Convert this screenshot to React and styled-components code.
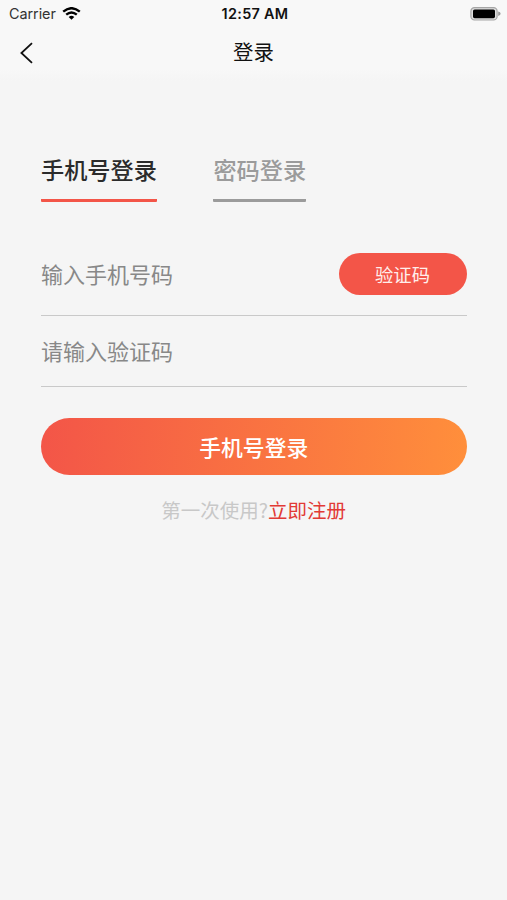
import React from "react";
import styled, { createGlobalStyle } from "styled-components";

const colors = {
	background: "#f5f5f5",
	bar: "#f8f8f8",
	red: "#f35548",
	orange: "#ff8f3b",
	link: "#e23a35",
	text: "#2b2b2b",
	muted: "#9b9b9b",
	placeholder: "#888888",
	hint: "#c8c8c8",
	line: "#c9c9c9",
};

const GlobalStyle = createGlobalStyle`
	* {
		box-sizing: border-box;
	}

	body {
		margin: 0;
		background: ${ colors.background };
		font-family: "Noto Sans CJK SC", sans-serif;
	}

	button {
		padding: 0;
		border: 0;
		background: none;
		font-family: inherit;
		cursor: pointer;
	}
`;

const Screen = styled.div`
	display: flex;
	flex-direction: column;
	width: 507px;
	height: 900px;
	overflow: hidden;
	background: ${ colors.background };
`;

const Header = styled.header`
	height: 81px;
	background: linear-gradient(${ colors.bar } 85%, ${ colors.background });
`;

const StatusBar = styled.div`
	display: grid;
	grid-template-columns: 1fr auto 1fr;
	align-items: center;
	height: 27px;
	padding: 0 6px 0 9px;
	font-family: Inter, sans-serif;
	color: #111;
`;

const Carrier = styled.div`
	display: flex;
	align-items: center;
	gap: 6px;
	font-size: 14.4px;
	letter-spacing: -0.05px;
	color: #333;
`;

const Time = styled.div`
	font-size: 14.4px;
	font-weight: 600;
	letter-spacing: 0.3px;
`;

const BatterySlot = styled.div`
	display: flex;
	justify-content: flex-end;
`;

const NavBar = styled.div`
	display: grid;
	grid-template-columns: 60px 1fr 60px;
	align-items: center;
	height: 52px;
`;

const BackButton = styled.button`
	display: flex;
	padding-left: 19px;
`;

const Title = styled.h1`
	margin: 0 0 4px;
	font-size: 20.4px;
	font-weight: 400;
	line-height: 30px;
	text-align: center;
	color: #111;
`;

const Content = styled.main`
	padding: 71px 40.5px 0 41px;
`;

const Tabs = styled.div`
	display: flex;
	gap: 56.5px;
	margin-bottom: 31px;
`;

const Tab = styled.button`
	height: 50px;
	padding-bottom: 13px;
	border-bottom: 3px solid ${ props => props.$active ? colors.red : colors.muted };
	border-radius: 1px;
	font-size: 23.2px;
	font-weight: 500;
	line-height: 34px;
	color: ${ props => props.$active ? colors.text : colors.muted };
`;

const Field = styled.div`
	display: flex;
	align-items: center;
	justify-content: space-between;
	height: ${ props => props.$height };
	border-bottom: 1px solid ${ colors.line };
`;

const Placeholder = styled.span`
	padding-bottom: 2px;
	font-size: 22px;
	line-height: 32px;
	color: ${ colors.placeholder };
`;

const CodeButton = styled.button`
	width: 128px;
	height: 42px;
	border-radius: 21px;
	background: ${ colors.red };
	font-size: 18.3px;
	line-height: 41px;
	color: #ffeeeb;
`;

const SubmitButton = styled.button`
	width: 100%;
	height: 57px;
	margin-top: 31px;
	border-radius: 29px;
	background: linear-gradient(95deg, ${ colors.red }, ${ colors.orange });
	font-size: 21.8px;
	font-weight: 500;
	line-height: 57px;
	color: #fff;
`;

const Register = styled.p`
	margin: 20px 0 0;
	font-size: 19.5px;
	line-height: 30px;
	text-align: center;
	color: ${ colors.hint };
`;

const RegisterLink = styled.span`
	color: ${ colors.link };
`;

/**
 * Returns the wifi signal icon.
 *
 * @returns {ReactElement} The icon.
 */
function WifiIcon() {
	return <svg width="19" height="14" viewBox="0 0 19 14" fill="none" stroke="#000" strokeWidth="2.4">
		<path d="M1.2 4.7Q9.5 -2.3 17.8 4.7" />
		<path d="M4.2 7.7Q9.5 3.3 14.8 7.7" />
		<path d="M6.7 9.9Q9.5 7.6 12.3 9.9L9.5 12.8Z" fill="#000" stroke="none" />
	</svg>;
}

/**
 * Returns the battery icon.
 *
 * @returns {ReactElement} The icon.
 */
function BatteryIcon() {
	return <svg width="31" height="14" viewBox="0 0 31 14">
		<rect x="0.9" y="0.6" width="26.2" height="12.4" rx="3.6" fill="#dedede" stroke="#a5a5a5" strokeWidth="1.2" />
		<rect x="3" y="2.4" width="22" height="8.8" rx="1.6" fill="#000" />
		<path d="M28.2 4.6Q30.6 5.2 30.6 6.8T28.2 9Z" fill="#999" />
	</svg>;
}

/**
 * Returns the back chevron.
 *
 * @returns {ReactElement} The icon.
 */
function BackIcon() {
	return <svg width="15" height="22" viewBox="0 0 15 22" fill="none" stroke="#111" strokeWidth="1.8">
		<path d="M13 1.2L2.4 11L13 20.8" />
	</svg>;
}

/**
 * Returns the login screen.
 *
 * @returns {ReactElement} The login screen.
 */
export default function App() {
	return <React.Fragment>
		<GlobalStyle />
		<Screen>
			<Header>
				<StatusBar>
					<Carrier>Carrier <WifiIcon /></Carrier>
					<Time>12:57 AM</Time>
					<BatterySlot><BatteryIcon /></BatterySlot>
				</StatusBar>
				<NavBar>
					<BackButton type="button" aria-label="返回"><BackIcon /></BackButton>
					<Title>登录</Title>
				</NavBar>
			</Header>
			<Content>
				<Tabs>
					<Tab type="button" $active={ true }>手机号登录</Tab>
					<Tab type="button">密码登录</Tab>
				</Tabs>
				<Field $height="83px">
					<Placeholder>输入手机号码</Placeholder>
					<CodeButton type="button">验证码</CodeButton>
				</Field>
				<Field $height="71px">
					<Placeholder>请输入验证码</Placeholder>
				</Field>
				<SubmitButton type="button">手机号登录</SubmitButton>
				<Register>第一次使用?<RegisterLink>立即注册</RegisterLink></Register>
			</Content>
		</Screen>
	</React.Fragment>;
}
